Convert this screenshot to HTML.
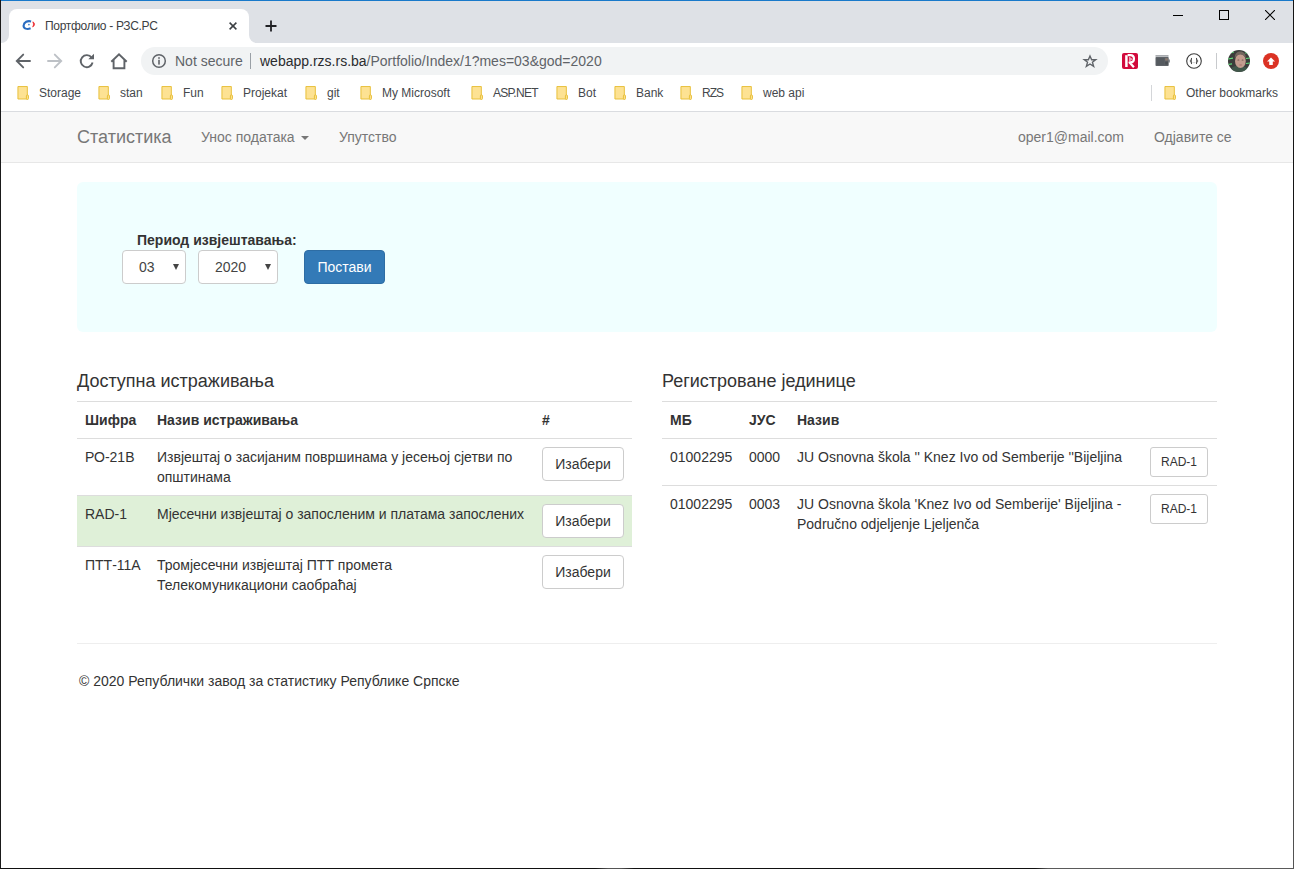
<!DOCTYPE html>
<html><head><meta charset="utf-8">
<style>
*{margin:0;padding:0;box-sizing:border-box}
html,body{width:1294px;height:869px;overflow:hidden;background:#fff;font-family:"Liberation Sans",sans-serif;position:relative}
.a{position:absolute;white-space:nowrap}
/* window frame */
#frame-top{left:0;top:0;width:1294px;height:1px;background:#1979ca}
#frame-left{left:0;top:0;width:1px;height:869px;background:#1a1a1a}
#frame-right{left:1293px;top:0;width:1px;height:869px;background:linear-gradient(180deg,#151515 0%,#151515 60%,#2a2a2a 75%,#555 100%)}
#frame-bottom{left:0;top:868px;width:1294px;height:1px;background:linear-gradient(90deg,#111 0%,#111 46%,#555 47%,#555 48%,#111 49%,#111 80%,#5a5a5a 81%,#5a5a5a 100%)}
#tabstrip{left:1px;top:1px;width:1292px;height:42px;background:#dee1e6}
#toolbar{left:1px;top:43px;width:1292px;height:68px;background:#fff}
#tab{left:9px;top:9px;width:240px;height:35px;background:#fff;border-radius:8px 8px 0 0}
.tabfoot{top:35px;width:8px;height:8px;background:#fff}
.tabfoot:after{content:"";position:absolute;left:0;top:0;width:8px;height:8px;background:#dee1e6}
#tf1{left:1px}
#tf1:after{border-radius:0 0 8px 0}
#tf2{left:249px}
#tf2:after{border-radius:0 0 0 8px}
.tabtitle{left:45px;top:19px;font-size:12px;letter-spacing:-0.3px;color:#3c4043}
.chrome-t{font-size:13px;color:#3c4043}
#pill{left:141px;top:47px;width:967px;height:28px;background:#f1f3f4;border-radius:14px}
.bm{top:86px;font-size:12px;color:#45484c}
.folder{top:86px;width:12px;height:14px}
#bmline{left:1px;top:111px;width:1292px;height:1px;background:#dadce0}

/* page */
#navbar{left:1px;top:112px;width:1292px;height:50px;background:#f8f8f8}
#navline{left:1px;top:162px;width:1292px;height:1px;background:#e7e7e7}
.nav{color:#777;font-size:14px;top:129px}
#brand{left:77px;top:127px;font-size:18px;color:#777}
#jumbo{left:77px;top:182px;width:1140px;height:150px;background:#f0ffff;border-radius:6px}
.lbl{font-weight:bold;font-size:14px;color:#333}
.sel{background:#fff;border:1px solid #ccc;border-radius:4px;height:34px}
.sel span{position:absolute;font-size:14px;color:#444;top:8px}
.sel i{position:absolute;top:13px;width:0;height:0;border-left:3.5px solid transparent;border-right:3.5px solid transparent;border-top:6px solid #444}
#btnp{left:304px;top:250px;width:81px;height:34px;background:#337ab7;border:1px solid #2e6da4;border-radius:4px;color:#fff;font-size:14px;text-align:center;line-height:32px}
h4{position:absolute;font-weight:normal;font-size:18px;color:#333;white-space:nowrap;margin-top:1px}
.hl{height:1px;background:#ddd}
.t{font-size:14px;color:#333;line-height:20px}
.b{font-weight:bold}
.btn{background:#fff;border:1px solid #ccc;border-radius:4px;color:#333;text-align:center}
.btn14{width:82px;height:34px;font-size:14px;line-height:32px}
.btn12{width:58px;height:30px;font-size:12px;line-height:28px;border-radius:3px}
#success{left:77px;top:496px;width:555px;height:50px;background:#dff0d8}
#hr{left:77px;top:643px;width:1140px;height:1px;background:#eee}
</style></head><body>
<div class="a" id="tabstrip"></div>
<div class="a" id="toolbar"></div>
<div class="a" id="tab"></div>
<div class="a tabfoot" id="tf1"></div>
<div class="a tabfoot" id="tf2"></div>

<!-- favicon -->
<svg class="a" style="left:22px;top:19px" width="14" height="14" viewBox="0 0 14 14">
<path d="M9.1 2.4 C5.8 1.4 1.8 3 1.6 6.6 C1.4 9.6 5 10.8 8.6 9.3" fill="none" stroke="#2a6cc0" stroke-width="2.1" stroke-linecap="butt"/>
<circle cx="6.9" cy="5.6" r="0.9" fill="#4a86cf"/>
<path d="M10.7 2.9 C13 3.6 13.4 6.4 10.6 8 C11.6 6.4 11.8 4.4 10.7 2.9Z" fill="#ea1c24" stroke="#ea1c24" stroke-width="0.6"/>
</svg>
<div class="a tabtitle">Портфолио - РЗС.РС</div>
<!-- tab close -->
<svg class="a" style="left:229px;top:22px" width="8" height="8" viewBox="0 0 8 8"><path d="M0.6 0.6L7.4 7.4M7.4 0.6L0.6 7.4" stroke="#3c4043" stroke-width="1.5"/></svg>
<!-- new tab plus -->
<svg class="a" style="left:264px;top:19px" width="14" height="14" viewBox="0 0 14 14"><path d="M7 1.5V12.5M1.5 7H12.5" stroke="#202124" stroke-width="1.8"/></svg>
<!-- window controls -->
<div class="a" style="left:1173px;top:15px;width:10px;height:1px;background:#000"></div>
<div class="a" style="left:1219px;top:10px;width:10px;height:10px;border:1px solid #000"></div>
<svg class="a" style="left:1265px;top:10px" width="10" height="10" viewBox="0 0 10 10"><path d="M0 0L10 10M10 0L0 10" stroke="#000" stroke-width="1.1"/></svg>

<!-- nav buttons -->
<svg class="a" style="left:15px;top:53px" width="16" height="16" viewBox="0 0 16 16"><path d="M15 8H2.5M8.2 1.6L1.8 8L8.2 14.4" fill="none" stroke="#5f6368" stroke-width="1.9" stroke-linecap="round"/></svg>
<svg class="a" style="left:47px;top:53px" width="16" height="16" viewBox="0 0 16 16"><path d="M1 8H13.5M7.8 1.6L14.2 8L7.8 14.4" fill="none" stroke="#bdc1c6" stroke-width="1.9" stroke-linecap="round"/></svg>
<svg class="a" style="left:79px;top:53px" width="16" height="16" viewBox="0 0 16 16"><path d="M12.6 4.6A6 6 0 1 0 13.6 9.5" fill="none" stroke="#5f6368" stroke-width="1.9"/><path d="M9.3 6.3H15V0.8Z" fill="#5f6368"/></svg>
<svg class="a" style="left:110px;top:52px" width="18" height="18" viewBox="0 0 18 18"><path d="M1.3 9.8L9 2.3L16.7 9.8M3.6 8V16.2H14.4V8" fill="none" stroke="#5f6368" stroke-width="1.9" stroke-linejoin="miter"/></svg>

<div class="a" id="pill"></div>
<svg class="a" style="left:151px;top:53px" width="16" height="16" viewBox="0 0 16 16"><circle cx="8" cy="8" r="6.3" fill="none" stroke="#5f6368" stroke-width="1.5"/><rect x="7.2" y="6.8" width="1.6" height="4.8" fill="#5f6368"/><rect x="7.2" y="4.2" width="1.6" height="1.6" fill="#5f6368"/></svg>
<div class="a chrome-t" style="left:175px;top:53px;color:#5f6368;font-size:14px">Not secure</div>
<div class="a" style="left:250px;top:53px;width:1px;height:16px;background:#9aa0a6"></div>
<div class="a chrome-t" style="left:260px;top:53px;font-size:14px"><span style="color:#2a2b2e">webapp.rzs.rs.ba</span><span style="color:#5f6368">/Portfolio/Index/1?mes=03&amp;god=2020</span></div>
<!-- star -->
<svg class="a" style="left:1082px;top:53px" width="16" height="16" viewBox="0 0 16 16"><path transform="translate(8 8.5) scale(0.87) translate(-8 -8)" d="M8 1.6L9.9 6H14.6L10.8 8.9L12.2 13.6L8 10.8L3.8 13.6L5.2 8.9L1.4 6H6.1Z" fill="none" stroke="#5f6368" stroke-width="1.55" stroke-linejoin="miter"/></svg>
<!-- extensions -->
<svg class="a" style="left:1122px;top:53px" width="16" height="16" viewBox="0 0 16 16"><rect x="0" y="0" width="16" height="16" rx="2" fill="#d20a3c"/><path d="M4.4 2.2V14" fill="none" stroke="#fff" stroke-width="2.5"/><path d="M5.6 2.2H8.3C13.2 2.2 13.2 9.4 8.3 9.4H7.6L11.9 14.3" fill="none" stroke="#fff" stroke-width="2.2" stroke-linejoin="round"/><path d="M7 3.6L11 6.2L7 8.8Z" fill="#f0a0b4"/></svg>
<svg class="a" style="left:1155px;top:55px" width="15" height="12" viewBox="0 0 15 12"><rect x="0.5" y="0" width="13" height="1.8" fill="#a9acb0"/><rect x="0.5" y="2" width="13.2" height="9" rx="0.8" fill="#5f6368"/><rect x="1.5" y="3" width="8" height="7" fill="#555a5f"/><rect x="10.2" y="3.2" width="2.6" height="2.4" fill="#8a7a70"/><rect x="10.2" y="6.6" width="2.6" height="3" fill="#4a4e52"/><rect x="13.5" y="4.5" width="1.2" height="3" fill="#5f6368"/></svg>
<svg class="a" style="left:1186px;top:53px" width="16" height="16" viewBox="0 0 16 16"><circle cx="8" cy="8" r="7.3" fill="none" stroke="#3c3c3c" stroke-width="1.1"/><path d="M5.9 5.2C5.1 5.2 5.3 6.8 5.1 7.6L4.5 8L5.1 8.4C5.3 9.2 5.1 10.8 5.9 10.8M10.1 5.2C10.9 5.2 10.7 6.8 10.9 7.6L11.5 8L10.9 8.4C10.7 9.2 10.9 10.8 10.1 10.8" fill="none" stroke="#2a2a2a" stroke-width="1.1"/><path d="M6.7 9.6H9.3" stroke="#9a9a9a" stroke-width="0.8" stroke-dasharray="0.6 0.4"/></svg>
<div class="a" style="left:1216px;top:53px;width:1px;height:16px;background:#c8cacd"></div>
<svg class="a" style="left:1228px;top:50px" width="22" height="22" viewBox="0 0 22 22"><defs><clipPath id="cc"><circle cx="11" cy="11" r="11"/></clipPath></defs><g clip-path="url(#cc)"><rect width="22" height="22" fill="#3b3d3b"/><path d="M0 3.5L6 2M0 9L5 8.2M0 14.5L4 13.8M17 3L22 2.5M18 8.5L22 8M18 13.5L22 13M15 20L22 18" stroke="#5ee07a" stroke-width="1.2"/><path d="M1 23C2 17 7 15.5 11 16C16 15.5 20 17 21 23Z" fill="#41574a"/><ellipse cx="12.4" cy="11" rx="5.4" ry="7" fill="#c29c8e"/><path d="M6.8 8.6C6.4 3.2 9.6 1.4 12.4 1.4C15.6 1.4 18 3.4 17.8 8.4C17 5.6 14.6 4.4 12.2 4.4C9.8 4.4 7.8 5.6 6.8 8.6Z" fill="#72665e"/><ellipse cx="10.4" cy="10" rx="1" ry="0.5" fill="#6a524a"/><ellipse cx="14.6" cy="10" rx="1" ry="0.5" fill="#6a524a"/><path d="M11.4 15H13.8" stroke="#a86a66" stroke-width="0.9"/></g></svg>
<svg class="a" style="left:1263px;top:53px" width="16" height="16" viewBox="0 0 16 16"><circle cx="8" cy="8" r="8" fill="#db3224"/><path d="M8 4.6L12 8.6H9.8V12H6.2V8.6H4Z" fill="#fff"/></svg>

<!-- bookmarks -->
<svg class="a folder" style="left:17px" width="13" height="15" viewBox="0 0 13 15"><path d="M1 0.5H11.2V14H1Z" fill="#fde293" stroke="#e6bd32" stroke-width="1"/><rect x="10.2" y="9.6" width="2.2" height="4.9" rx="1" fill="#fde293" stroke="#e6bd32" stroke-width="1"/></svg>
<div class="a bm" style="left:39px">Storage</div>
<svg class="a folder" style="left:98px" width="13" height="15" viewBox="0 0 13 15"><path d="M1 0.5H11.2V14H1Z" fill="#fde293" stroke="#e6bd32" stroke-width="1"/><rect x="10.2" y="9.6" width="2.2" height="4.9" rx="1" fill="#fde293" stroke="#e6bd32" stroke-width="1"/></svg>
<div class="a bm" style="left:120px">stan</div>
<svg class="a folder" style="left:161px" width="13" height="15" viewBox="0 0 13 15"><path d="M1 0.5H11.2V14H1Z" fill="#fde293" stroke="#e6bd32" stroke-width="1"/><rect x="10.2" y="9.6" width="2.2" height="4.9" rx="1" fill="#fde293" stroke="#e6bd32" stroke-width="1"/></svg>
<div class="a bm" style="left:183px">Fun</div>
<svg class="a folder" style="left:221px" width="13" height="15" viewBox="0 0 13 15"><path d="M1 0.5H11.2V14H1Z" fill="#fde293" stroke="#e6bd32" stroke-width="1"/><rect x="10.2" y="9.6" width="2.2" height="4.9" rx="1" fill="#fde293" stroke="#e6bd32" stroke-width="1"/></svg>
<div class="a bm" style="left:243px">Projekat</div>
<svg class="a folder" style="left:305px" width="13" height="15" viewBox="0 0 13 15"><path d="M1 0.5H11.2V14H1Z" fill="#fde293" stroke="#e6bd32" stroke-width="1"/><rect x="10.2" y="9.6" width="2.2" height="4.9" rx="1" fill="#fde293" stroke="#e6bd32" stroke-width="1"/></svg>
<div class="a bm" style="left:327px">git</div>
<svg class="a folder" style="left:360px" width="13" height="15" viewBox="0 0 13 15"><path d="M1 0.5H11.2V14H1Z" fill="#fde293" stroke="#e6bd32" stroke-width="1"/><rect x="10.2" y="9.6" width="2.2" height="4.9" rx="1" fill="#fde293" stroke="#e6bd32" stroke-width="1"/></svg>
<div class="a bm" style="left:382px">My Microsoft</div>
<svg class="a folder" style="left:471px" width="13" height="15" viewBox="0 0 13 15"><path d="M1 0.5H11.2V14H1Z" fill="#fde293" stroke="#e6bd32" stroke-width="1"/><rect x="10.2" y="9.6" width="2.2" height="4.9" rx="1" fill="#fde293" stroke="#e6bd32" stroke-width="1"/></svg>
<div class="a bm" style="left:493px;letter-spacing:-0.7px">ASP.NET</div>
<svg class="a folder" style="left:556px" width="13" height="15" viewBox="0 0 13 15"><path d="M1 0.5H11.2V14H1Z" fill="#fde293" stroke="#e6bd32" stroke-width="1"/><rect x="10.2" y="9.6" width="2.2" height="4.9" rx="1" fill="#fde293" stroke="#e6bd32" stroke-width="1"/></svg>
<div class="a bm" style="left:578px">Bot</div>
<svg class="a folder" style="left:614px" width="13" height="15" viewBox="0 0 13 15"><path d="M1 0.5H11.2V14H1Z" fill="#fde293" stroke="#e6bd32" stroke-width="1"/><rect x="10.2" y="9.6" width="2.2" height="4.9" rx="1" fill="#fde293" stroke="#e6bd32" stroke-width="1"/></svg>
<div class="a bm" style="left:636px">Bank</div>
<svg class="a folder" style="left:680px" width="13" height="15" viewBox="0 0 13 15"><path d="M1 0.5H11.2V14H1Z" fill="#fde293" stroke="#e6bd32" stroke-width="1"/><rect x="10.2" y="9.6" width="2.2" height="4.9" rx="1" fill="#fde293" stroke="#e6bd32" stroke-width="1"/></svg>
<div class="a bm" style="left:702px;letter-spacing:-1px">RZS</div>
<svg class="a folder" style="left:741px" width="13" height="15" viewBox="0 0 13 15"><path d="M1 0.5H11.2V14H1Z" fill="#fde293" stroke="#e6bd32" stroke-width="1"/><rect x="10.2" y="9.6" width="2.2" height="4.9" rx="1" fill="#fde293" stroke="#e6bd32" stroke-width="1"/></svg>
<div class="a bm" style="left:763px">web api</div>
<div class="a" style="left:1151px;top:85px;width:1px;height:16px;background:#d4d6d9"></div>
<svg class="a folder" style="left:1164px" width="13" height="15" viewBox="0 0 13 15"><path d="M1 0.5H11.2V14H1Z" fill="#fde293" stroke="#e6bd32" stroke-width="1"/><rect x="10.2" y="9.6" width="2.2" height="4.9" rx="1" fill="#fde293" stroke="#e6bd32" stroke-width="1"/></svg>
<div class="a bm" style="left:1186px">Other bookmarks</div>
<div class="a" id="bmline"></div>

<!-- PAGE -->
<div class="a" id="navbar"></div>
<div class="a" id="navline"></div>
<div class="a" id="brand">Статистика</div>
<div class="a nav" style="left:201px">Унос података</div>
<div class="a" style="left:301px;top:136px;width:0;height:0;border-left:4px solid transparent;border-right:4px solid transparent;border-top:4px solid #777"></div>
<div class="a nav" style="left:339px">Упутство</div>
<div class="a nav" style="left:1018px">oper1@mail.com</div>
<div class="a nav" style="left:1154px">Одјавите се</div>

<div class="a" id="jumbo"></div>
<div class="a lbl" style="left:137px;top:232px">Период извјештавања:</div>
<div class="a sel" style="left:122px;top:250px;width:64px"><span style="left:16px">03</span><i style="left:50px"></i></div>
<div class="a sel" style="left:198px;top:250px;width:80px"><span style="left:16px">2020</span><i style="left:66px"></i></div>
<div class="a" id="btnp">Постави</div>

<!-- left table -->
<h4 style="left:77px;top:370px">Доступна истраживања</h4>
<div class="a hl" style="left:77px;top:401px;width:555px"></div>
<div class="a t b" style="left:85px;top:410px">Шифра</div>
<div class="a t b" style="left:157px;top:410px">Назив истраживања</div>
<div class="a t b" style="left:542px;top:410px">#</div>
<div class="a hl" style="left:77px;top:438px;width:555px"></div>
<div class="a t" style="left:85px;top:447px">РО-21В</div>
<div class="a t" style="left:157px;top:447px;white-space:normal;width:377px">Извјештај о засијаним површинама у јесењој сјетви по општинама</div>
<div class="a btn btn14" style="left:542px;top:447px">Изабери</div>
<div class="a hl" style="left:77px;top:495px;width:555px"></div>
<div class="a" id="success"></div>
<div class="a t" style="left:85px;top:504px">RAD-1</div>
<div class="a t" style="left:157px;top:504px">Мјесечни извјештај о запосленим и платама запослених</div>
<div class="a btn btn14" style="left:542px;top:504px">Изабери</div>
<div class="a hl" style="left:77px;top:546px;width:555px"></div>
<div class="a t" style="left:85px;top:555px">ПТТ-11А</div>
<div class="a t" style="left:157px;top:555px">Тромјесечни извјештај ПТТ промета<br>Телекомуникациони саобраћај</div>
<div class="a btn btn14" style="left:542px;top:555px">Изабери</div>

<!-- right table -->
<h4 style="left:662px;top:370px">Регистроване јединице</h4>
<div class="a hl" style="left:662px;top:401px;width:555px"></div>
<div class="a t b" style="left:670px;top:410px">МБ</div>
<div class="a t b" style="left:749px;top:410px">ЈУС</div>
<div class="a t b" style="left:797px;top:410px">Назив</div>
<div class="a hl" style="left:662px;top:438px;width:555px"></div>
<div class="a t" style="left:670px;top:447px">01002295</div>
<div class="a t" style="left:749px;top:447px">0000</div>
<div class="a t" style="left:797px;top:447px">JU Osnovna škola '' Knez Ivo od Semberije ''Bijeljina</div>
<div class="a btn btn12" style="left:1150px;top:447px">RAD-1</div>
<div class="a hl" style="left:662px;top:485px;width:555px"></div>
<div class="a t" style="left:670px;top:494px">01002295</div>
<div class="a t" style="left:749px;top:494px">0003</div>
<div class="a t" style="left:797px;top:494px">JU Osnovna škola 'Knez Ivo od Semberije' Bijeljina -<br>Područno odjeljenje Ljeljenča</div>
<div class="a btn btn12" style="left:1150px;top:494px">RAD-1</div>

<div class="a" id="hr"></div>
<div class="a t" style="left:79px;top:671px">© 2020 Републички завод за статистику Републике Српске</div>

<div class="a" id="frame-top"></div>
<div class="a" id="frame-left"></div>
<div class="a" id="frame-right"></div>
<div class="a" id="frame-bottom"></div>
</body></html>
